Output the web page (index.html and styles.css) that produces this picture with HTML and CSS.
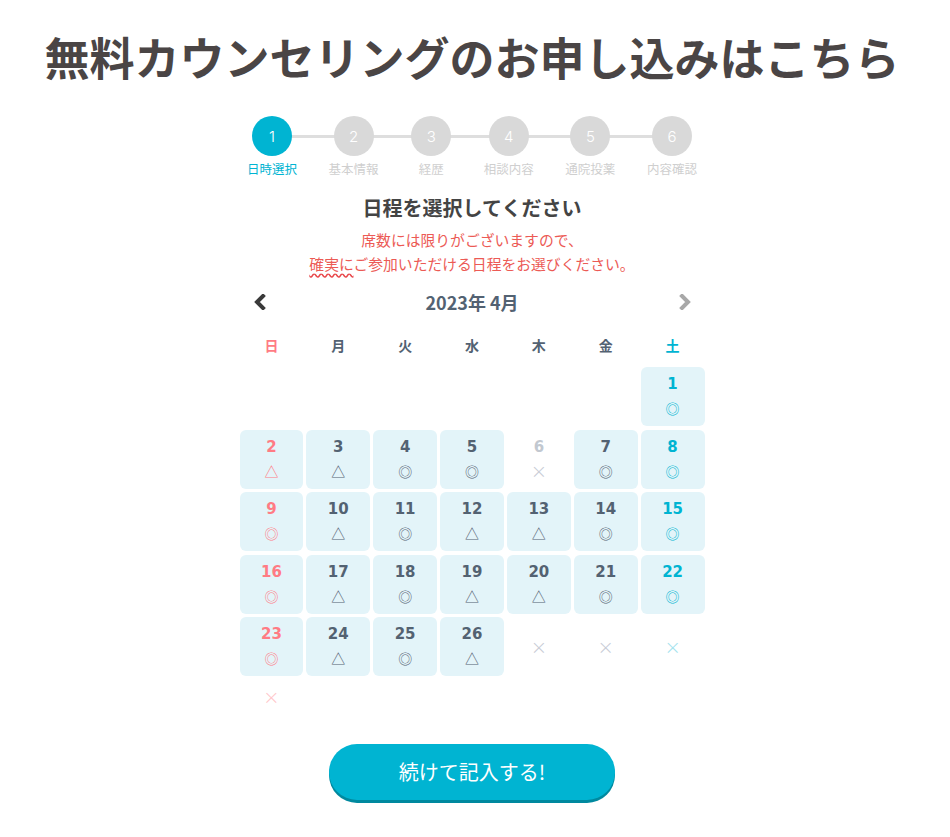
FILE: index.html
```html
<!DOCTYPE html>
<html lang="ja">
<head>
    <meta charset="UTF-8">
    <meta name="viewport" content="width=device-width, initial-scale=1.0">
    <title>無料カウンセリング</title>
    <link rel="stylesheet" href="styles.css">
</head>
<body>
    <main class="page">
        <h1 class="page-title">無料カウンセリングのお申し込みはこちら</h1>

        <ol class="steps">
            <li class="step active"><span class="step-num">1</span><span class="step-label">日時選択</span></li>
            <li class="step"><span class="step-num">2</span><span class="step-label">基本情報</span></li>
            <li class="step"><span class="step-num">3</span><span class="step-label">経歴</span></li>
            <li class="step"><span class="step-num">4</span><span class="step-label">相談内容</span></li>
            <li class="step"><span class="step-num">5</span><span class="step-label">通院投薬</span></li>
            <li class="step"><span class="step-num">6</span><span class="step-label">内容確認</span></li>
        </ol>

        <section class="schedule">
            <h2 class="schedule-title">日程を選択してください</h2>
            <p class="notice">席数には限りがございますので、<br><span class="squiggle">確実に</span>ご参加いただける日程をお選びください。</p>

            <div class="cal-head">
                <button class="cal-nav prev" type="button" aria-label="前の月">
                    <svg width="14" height="16" viewBox="0 0 14 16"><polyline points="10,2 4,8 10,14" fill="none" stroke="#3a3a3a" stroke-width="4" stroke-linecap="square"/></svg>
                </button>
                <div class="cal-month">2023年 4月</div>
                <button class="cal-nav next" type="button" aria-label="次の月">
                    <svg width="14" height="16" viewBox="0 0 14 16"><polyline points="4,2 10,8 4,14" fill="none" stroke="#a8a8a8" stroke-width="4" stroke-linecap="square"/></svg>
                </button>
            </div>

            <div class="weekdays">
                <span class="sun">日</span><span>月</span><span>火</span><span>水</span><span>木</span><span>金</span><span class="sat">土</span>
            </div>

            <div class="cal-grid">
                <div class="blank"></div><div class="blank"></div><div class="blank"></div><div class="blank"></div><div class="blank"></div><div class="blank"></div>
                <div class="day sat"><b>1</b><i>◎</i></div>

                <div class="day sun"><b>2</b><i>△</i></div>
                <div class="day"><b>3</b><i>△</i></div>
                <div class="day"><b>4</b><i>◎</i></div>
                <div class="day"><b>5</b><i>◎</i></div>
                <div class="day closed"><b>6</b><i class="x">×</i></div>
                <div class="day"><b>7</b><i>◎</i></div>
                <div class="day sat"><b>8</b><i>◎</i></div>

                <div class="day sun"><b>9</b><i>◎</i></div>
                <div class="day"><b>10</b><i>△</i></div>
                <div class="day"><b>11</b><i>◎</i></div>
                <div class="day"><b>12</b><i>△</i></div>
                <div class="day"><b>13</b><i>△</i></div>
                <div class="day"><b>14</b><i>◎</i></div>
                <div class="day sat"><b>15</b><i>◎</i></div>

                <div class="day sun"><b>16</b><i>◎</i></div>
                <div class="day"><b>17</b><i>△</i></div>
                <div class="day"><b>18</b><i>◎</i></div>
                <div class="day"><b>19</b><i>△</i></div>
                <div class="day"><b>20</b><i>△</i></div>
                <div class="day"><b>21</b><i>◎</i></div>
                <div class="day sat"><b>22</b><i>◎</i></div>

                <div class="day sun"><b>23</b><i>◎</i></div>
                <div class="day"><b>24</b><i>△</i></div>
                <div class="day"><b>25</b><i>◎</i></div>
                <div class="day"><b>26</b><i>△</i></div>
                <div class="none"><i class="x">×</i></div>
                <div class="none"><i class="x">×</i></div>
                <div class="none sat"><i class="x">×</i></div>

                <div class="none sun"><i class="x">×</i></div>
            </div>
        </section>

        <div class="actions">
            <button class="btn-next" type="button">続けて記入する!</button>
        </div>
    </main>
</body>
</html>
```

FILE: styles.css
```css
body {
    margin: 0;
    padding: 0 6px 0 0;
    background: #fff;
    font-family: "Noto Sans CJK JP", "Noto Sans", sans-serif;
    color: #4a4545;
}
.page {
    display: flex;
    flex-direction: column;
    align-items: center;
    padding-top: 28px;
}
.page-title {
    margin: 0;
    font-size: 45px;
    line-height: 58px;
    font-weight: 700;
    color: #4a4545;
}

/* steps */
.steps {
    position: relative;
    list-style: none;
    margin: 30px 0 0;
    padding: 0;
    width: 450px;
    display: flex;
    justify-content: space-between;
}
.steps::before {
    content: "";
    position: absolute;
    left: 25px;
    right: 25px;
    top: 19px;
    height: 3px;
    background: #dedede;
}
.step {
    position: relative;
    display: flex;
    flex-direction: column;
    align-items: center;
    min-width: 42px;
}
.step-num {
    width: 40px;
    height: 40px;
    border-radius: 50%;
    background: #d9d9d9;
    color: #fff;
    font-family: Inter, "Noto Sans", sans-serif;
    font-weight: 300;
    font-size: 15px;
    display: flex;
    align-items: center;
    justify-content: center;
}
.step-label {
    margin-top: 5px;
    font-size: 12.5px;
    line-height: 16px;
    color: #cfcfcf;
    white-space: nowrap;
}
.step.active .step-num { background: #00b4d2; }
.step.active .step-label { color: #00b4d2; }

/* schedule */
.schedule {
    width: 465px;
    margin-top: 18px;
    text-align: center;
}
.schedule-title {
    margin: 0;
    font-size: 20px;
    line-height: 26px;
    font-weight: 700;
    color: #444;
}
.notice {
    margin: 7px 0 0;
    font-size: 14.8px;
    line-height: 24px;
    color: #ec5a55;
}
.squiggle {
    text-decoration: underline wavy #e8474a;
    text-underline-offset: 3px;
}
.cal-head {
    margin-top: 14px;
    display: flex;
    align-items: center;
    justify-content: space-between;
    padding: 0 12px;
    height: 24px;
}
.cal-nav {
    border: none;
    background: none;
    padding: 0;
    width: 16px;
    height: 16px;
    display: flex;
    align-items: center;
    justify-content: center;
    cursor: pointer;
}
.cal-month {
    font-size: 18px;
    font-weight: 700;
    color: #536272;
}
.weekdays {
    margin-top: 21px;
    display: grid;
    grid-template-columns: repeat(7, 1fr);
    column-gap: 3px;
    font-size: 14px;
    line-height: 20px;
    font-weight: 700;
    color: #536272;
}
.sun { color: #ff7b84; }
.sat { color: #00b4d2; }

/* calendar cells */
.cal-grid {
    margin-top: 12px;
    display: grid;
    grid-template-columns: repeat(7, 1fr);
    gap: 3.5px 3px;
    color: #536272;
}
.day {
    height: 59px;
    border-radius: 6px;
    background: #e3f4f9;
    display: flex;
    flex-direction: column;
    align-items: center;
}
.day b {
    margin-top: 7px;
    font-size: 15px;
    line-height: 20px;
    font-weight: 700;
    font-family: "DejaVu Sans", "Noto Sans", sans-serif;
}
.day i,
.none i {
    font-style: normal;
    font-size: 14px;
    line-height: 20px;
}
.day i { margin-top: 4px; }
.day i.x,
.none i.x {
    font-family: "DejaVu Sans", sans-serif;
    font-weight: 200;
    font-size: 20px;
    line-height: 20px;
}
.day.sun b, .day.sun i { color: #ff7b84; }
.day.sat b, .day.sat i { color: #00b4d2; }
.day.closed { background: none; }
.day.closed b { color: #c2c8d0; }
.day.closed i { color: #c8ccd6; }
.none {
    min-height: 34px;
    display: flex;
    align-items: center;
    justify-content: center;
    color: #c8ccd6;
}
.none.sat { color: #a4e3ee; }
.none.sun { color: #ffc6ca; }

/* button */
.actions {
    margin-top: 30px;
    padding-bottom: 30px;
}
.btn-next {
    width: 286px;
    height: 56px;
    border: none;
    border-radius: 28px;
    background: #00b4d2;
    box-shadow: 0 3px 0 #00899f;
    color: #fff;
    font-family: "Noto Sans CJK JP", "Noto Sans", sans-serif;
    font-size: 20px;
    cursor: pointer;
}
```
